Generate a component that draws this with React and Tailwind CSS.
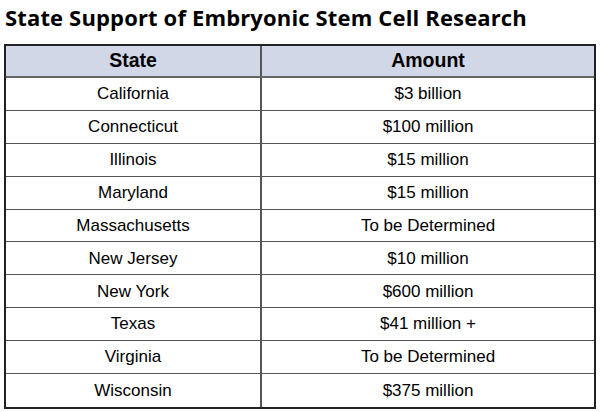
const rows = [
  ["California", "$3 billion"],
  ["Connecticut", "$100 million"],
  ["Illinois", "$15 million"],
  ["Maryland", "$15 million"],
  ["Massachusetts", "To be Determined"],
  ["New Jersey", "$10 million"],
  ["New York", "$600 million"],
  ["Texas", "$41 million +"],
  ["Virginia", "To be Determined"],
  ["Wisconsin", "$375 million"],
];

export default function App() {
  return (
    <div className="w-[600px] h-[412px] bg-white overflow-hidden">
      <h1
        className="pl-[5px] pt-[3px] h-[44px] text-[22px] font-bold text-black leading-[28px] tracking-[0.15px]"
        style={{ fontFamily: '"Open Sans", sans-serif' }}
      >
        State Support of Embryonic Stem Cell Research
      </h1>
      <div
        className="ml-[4px] w-[592px] border-2 border-[#222] text-black"
        style={{ fontFamily: '"Liberation Sans", Arial, sans-serif' }}
      >
        <div className="grid grid-cols-[256px_1fr] h-[32px] bg-[#d2d7e8] border-b-2 border-[#666] text-[19.5px] font-bold">
          <div className="flex items-center justify-center border-r-2 border-[#555]">State</div>
          <div className="flex items-center justify-center">Amount</div>
        </div>
        {rows.map(([s, a], i) => (
          <div
            key={s}
            className={`grid grid-cols-[256px_1fr] h-[32.9px] text-[17px] ${i < rows.length - 1 ? "border-b border-[#555]" : ""}`}
          >
            <div className="flex items-center justify-center border-r-2 border-[#555]">{s}</div>
            <div className="flex items-center justify-center">{a}</div>
          </div>
        ))}
      </div>
    </div>
  );
}
